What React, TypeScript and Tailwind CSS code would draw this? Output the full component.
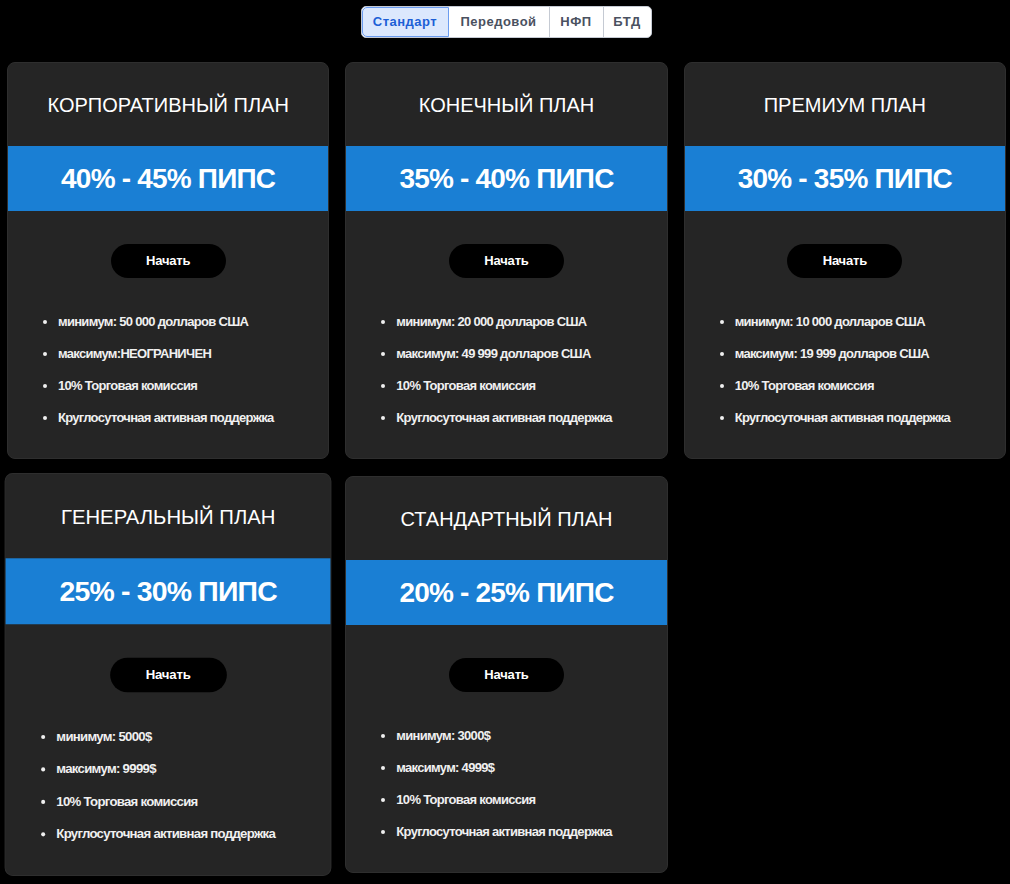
import React from "react";

const tabs = ["Стандарт", "Передовой", "НФП", "БТД"];

const plans = [
  {
    title: "КОРПОРАТИВНЫЙ ПЛАН",
    price: "40% - 45% ПИПС",
    items: ["минимум: 50 000 долларов США", "максимум:НЕОГРАНИЧЕН", "10% Торговая комиссия", "Круглосуточная активная поддержка"],
  },
  {
    title: "КОНЕЧНЫЙ ПЛАН",
    price: "35% - 40% ПИПС",
    items: ["минимум: 20 000 долларов США", "максимум: 49 999 долларов США", "10% Торговая комиссия", "Круглосуточная активная поддержка"],
  },
  {
    title: "ПРЕМИУМ ПЛАН",
    price: "30% - 35% ПИПС",
    items: ["минимум: 10 000 долларов США", "максимум: 19 999 долларов США", "10% Торговая комиссия", "Круглосуточная активная поддержка"],
  },
  {
    title: "ГЕНЕРАЛЬНЫЙ ПЛАН",
    price: "25% - 30% ПИПС",
    items: ["минимум: 5000$", "максимум: 9999$", "10% Торговая комиссия", "Круглосуточная активная поддержка"],
    scaled: true,
  },
  {
    title: "СТАНДАРТНЫЙ ПЛАН",
    price: "20% - 25% ПИПС",
    items: ["минимум: 3000$", "максимум: 4999$", "10% Торговая комиссия", "Круглосуточная активная поддержка"],
  },
];

function Card({ plan }: { plan: (typeof plans)[number] }) {
  return (
    <div
      className={
        "flex h-[397px] flex-col rounded-lg border border-[#2e2e2e] bg-[#252525] " +
        (plan.scaled ? "scale-[1.015]" : "")
      }
    >
      <div className="flex h-[83px] items-center justify-center pt-[1px] text-[20px] text-white">{plan.title}</div>
      <div className="flex h-[65px] items-center justify-center bg-[#1a7fd4] text-[28px] font-bold tracking-[-0.8px] text-white">
        {plan.price}
      </div>
      <div className="flex justify-center pt-[33px]">
        <button className="h-[34px] w-[115px] rounded-full bg-black text-[13px] font-bold tracking-[-0.2px] text-white">
          Начать
        </button>
      </div>
      <ul className="mt-[28px] list-disc pl-[50px] text-[13px] font-semibold text-[#f0f0f0]">
        {plan.items.map((it) => (
          <li key={it} className="h-[32px] leading-[32px] tracking-[-0.7px]">
            {it}
          </li>
        ))}
      </ul>
    </div>
  );
}

export default function App() {
  return (
    <div className="min-h-[884px] bg-black pb-[6px] font-['Liberation_Sans',Arial,sans-serif]">
      <div className="flex justify-center pt-[6px]">
        <div className="ml-[2px] flex h-[32px] overflow-hidden rounded-[5px] border border-[#c5cad3] bg-white">
          {tabs.map((t, i) => (
            <div
              key={t}
              className={
                "flex items-center justify-center text-[13px] font-bold tracking-[0.5px] " +
                (i === 0
                  ? "w-[87px] rounded-l-[5px] border border-[#6b9cf0] bg-[#dce8fd] text-[#1d5fd6]"
                  : "border-l border-[#c5cad3] text-[#4a5160] ") +
                (i === 1 ? "w-[100px] border-l-0" : i === 2 ? "w-[54px]" : i === 3 ? "w-[48px]" : "")
              }
            >
              {t}
            </div>
          ))}
        </div>
      </div>
      <div className="mt-[24px] grid grid-cols-3 gap-x-4 gap-y-[17px] pl-[7px] pr-[4px]">
        {plans.map((p) => (
          <Card key={p.title} plan={p} />
        ))}
      </div>
    </div>
  );
}
